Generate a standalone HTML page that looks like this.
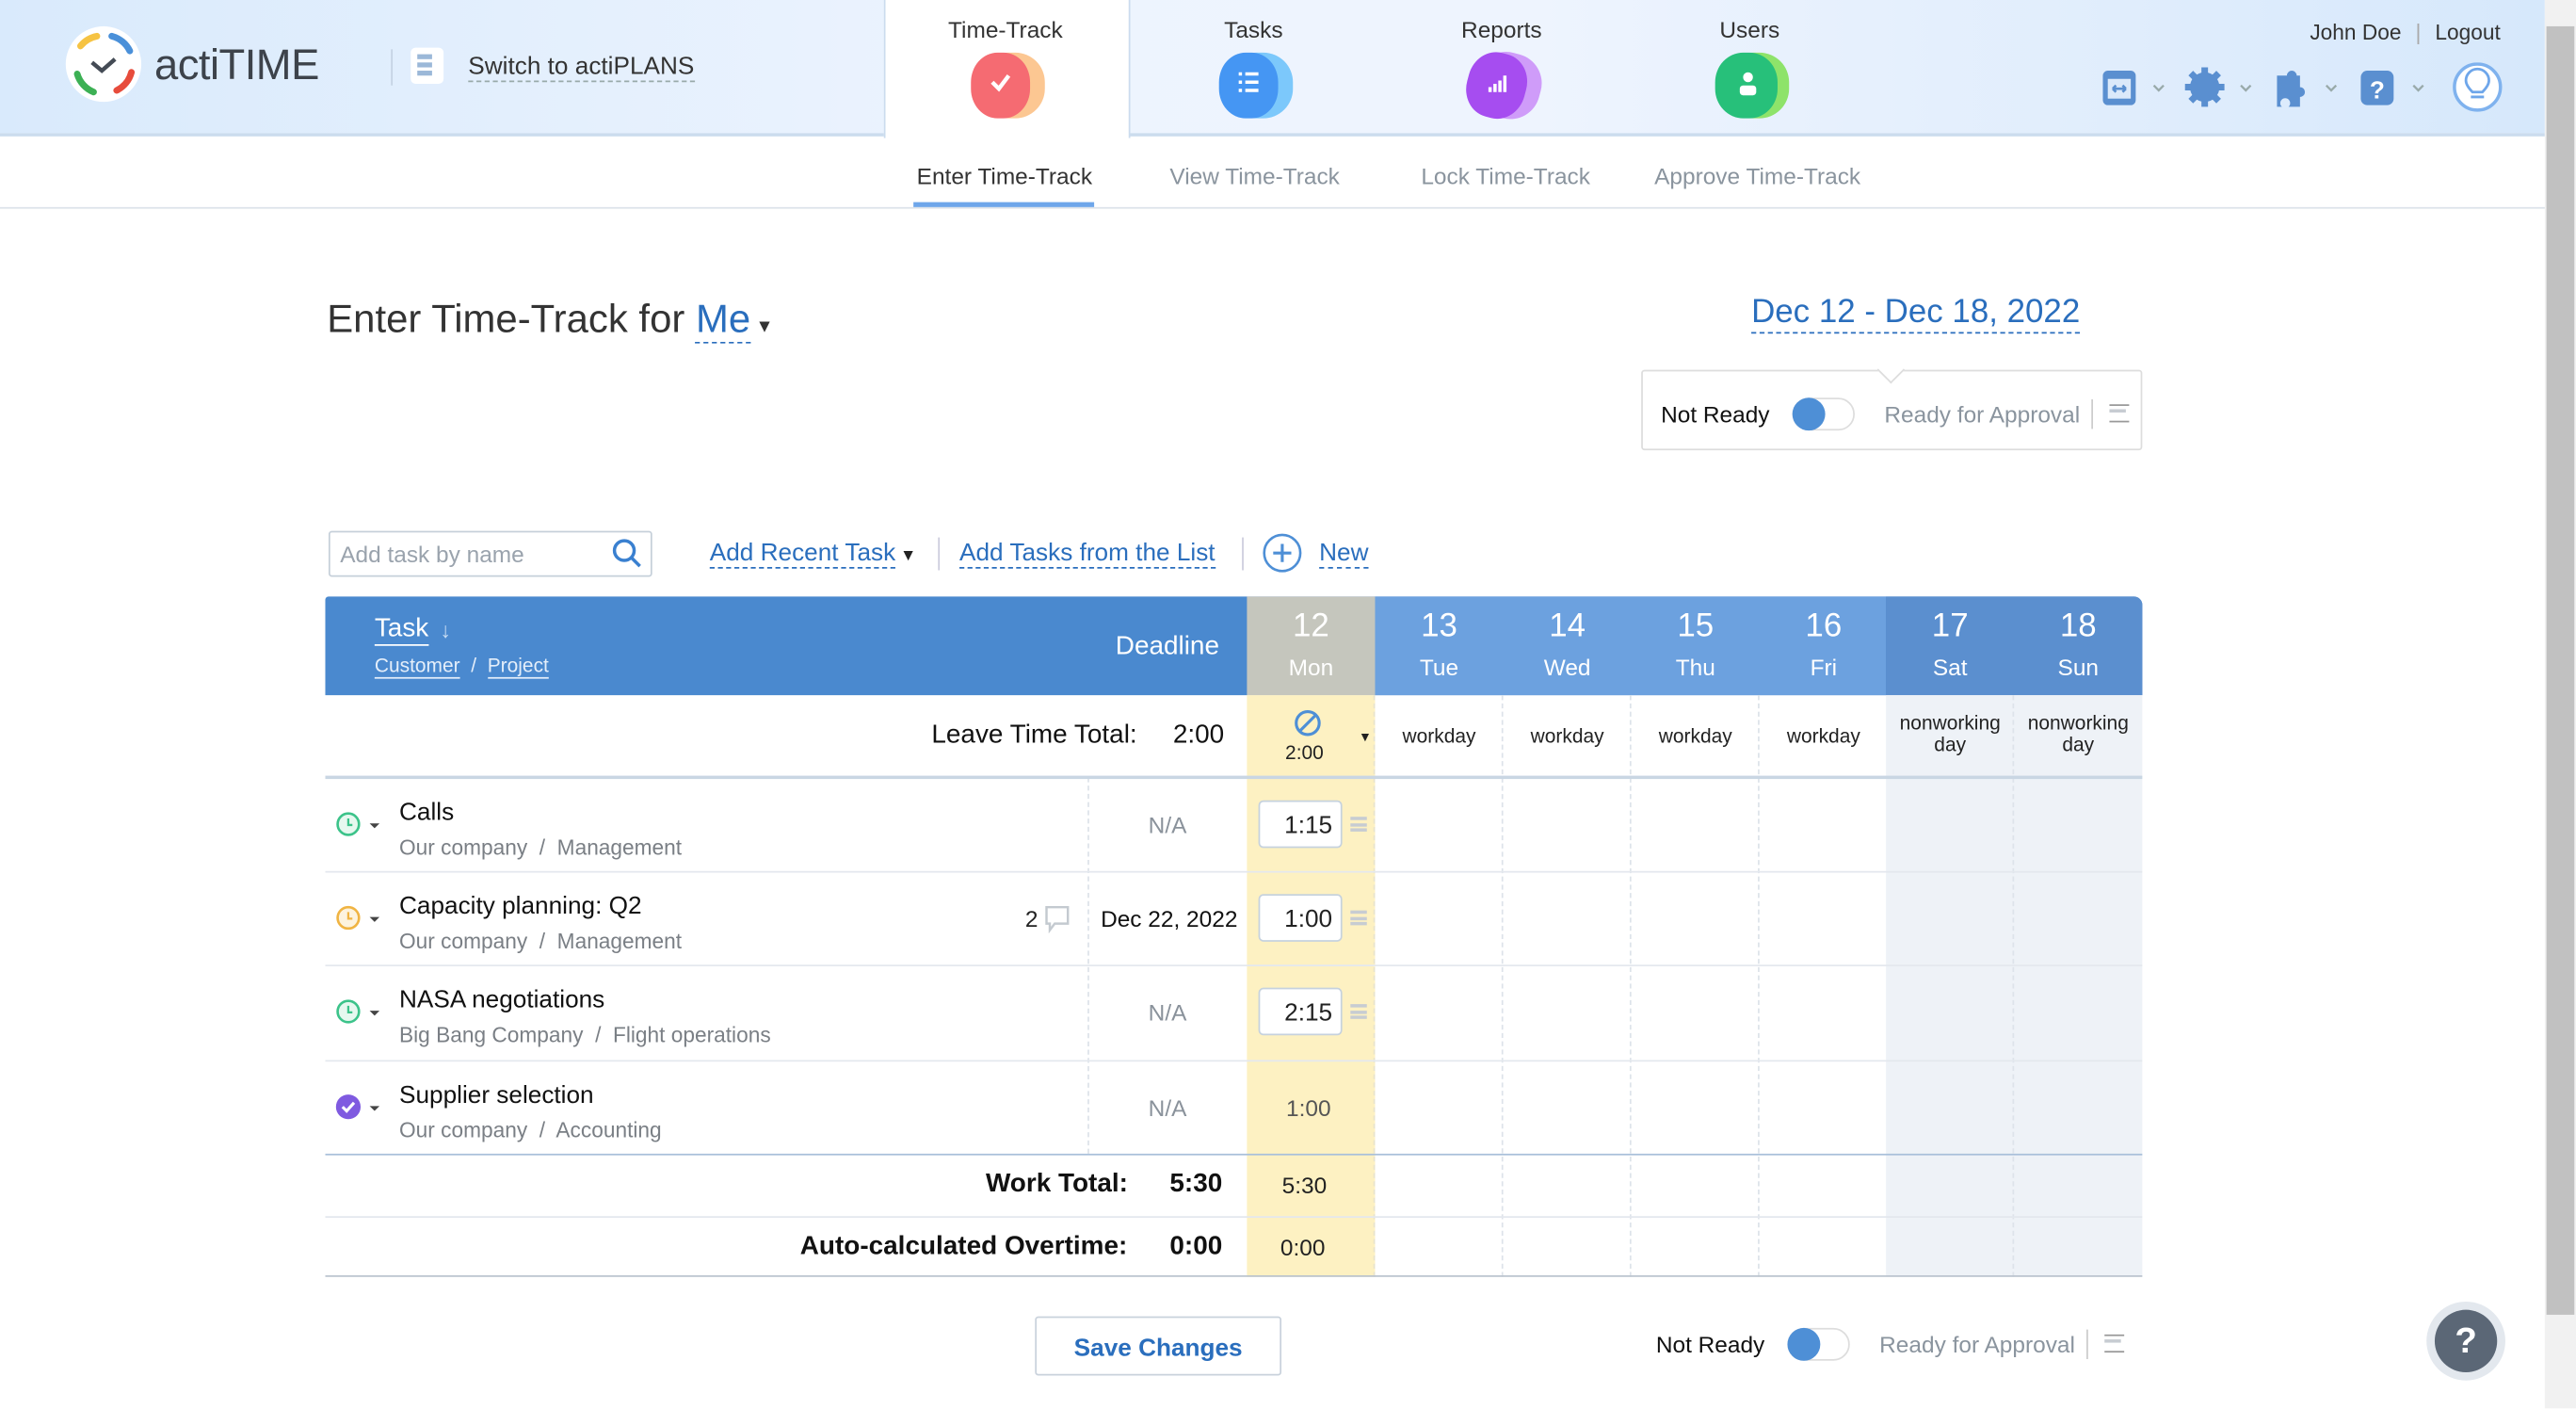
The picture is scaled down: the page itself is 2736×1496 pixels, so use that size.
<!DOCTYPE html>
<html><head><meta charset="utf-8"><style>
*{box-sizing:border-box;margin:0;padding:0}
html,body{width:2736px;height:1496px;overflow:hidden;background:#fff}
#w{position:absolute;left:0;top:0;width:1568px;height:857px;transform:scale(1.74490);transform-origin:0 0;font-family:"Liberation Sans",Arial,sans-serif;color:#222}
.a{position:absolute}
.hdr{left:0;top:0;width:1549px;height:83px;background:linear-gradient(90deg,#d9eafc 0%,#edf4fe 40%,#eef4fe 60%,#d6e8fb 100%);border-bottom:2px solid #cbdcee}
.tab{top:0;width:150px;text-align:center;font-size:14px;color:#333}
.tab .l{margin-top:10px}
.blob{position:absolute;left:55px;top:32px;width:40px;height:40px;border-radius:45%}
.sub{top:99px;font-size:14px;color:#8a949e}
.lnk{color:#2a6ebd;border-bottom:1px dashed #2a6ebd}
.th{color:#fff;text-align:center}
.cell{position:absolute;text-align:center;font-size:12px}
.inp{position:absolute;width:51px;height:29px;border:1px solid #c6d2de;border-radius:3px;background:#fff;text-align:right;padding:6px 5px 0 0;font-size:15px}
.tn{font-size:15px;color:#111}
.tp{font-size:13px;color:#7a7f85}
.lines{position:absolute;width:10px;height:9px;border-top:2px solid #c7ccd2;border-bottom:2px solid #c7ccd2}
.lines:after{content:"";position:absolute;left:0;top:1.5px;width:10px;height:2px;background:#c7ccd2}
</style></head><body><div id="w">
<div class="a hdr"></div>
<!-- logo -->
<svg class="a" style="left:39px;top:14px" width="50" height="50" viewBox="0 0 50 50">
<circle cx="24" cy="25" r="23" fill="#fff"/>
<path d="M10 14 A17 17 0 0 1 20 8" stroke="#f6c343" stroke-width="4" fill="none" stroke-linecap="round"/>
<path d="M29 8 A17 17 0 0 1 40 17" stroke="#4a90d9" stroke-width="4" fill="none" stroke-linecap="round"/>
<path d="M41 30 A17 17 0 0 1 32 41" stroke="#e74c3c" stroke-width="4" fill="none" stroke-linecap="round"/>
<path d="M18 42 A17 17 0 0 1 8 31" stroke="#3cb054" stroke-width="4" fill="none" stroke-linecap="round"/>
<path d="M17 24 L23 29 L31 22" stroke="#444b55" stroke-width="2.5" fill="none"/>
</svg>
<div class="a" style="left:94px;top:24px;font-size:26px;color:#3d434b;letter-spacing:-0.3px">actiTIME</div>
<div class="a" style="left:238px;top:30px;width:1px;height:22px;background:#c5d3e3"></div>
<div class="a" style="left:250px;top:29px;width:20px;height:22px;background:#fff;border-radius:3px"><div style="margin:4px 0 0 4px;width:9px;height:3px;background:#9bb8d8;box-shadow:0 5px 0 #9bb8d8,-0px 10px 0 -0px #9bb8d8"></div></div>
<div class="a" style="left:285px;top:32px;font-size:15px;color:#333;border-bottom:1px dashed #9aa">Switch to actiPLANS</div>
<!-- tabs -->
<div class="a" style="left:538px;top:0;width:150px;height:84px;background:#fff;border-left:1px solid #cbdcee;border-right:1px solid #cbdcee"></div>
<div class="a tab" style="left:537px"><div class="l">Time-Track</div>
<div class="blob" style="background:#fcc792;left:59px"></div><div class="blob" style="background:#f56b72;left:54px;width:36px"></div>
<svg class="a" style="left:64px;top:42px" width="16" height="16"><path d="M3 8 L7 12 L13 4" stroke="#fff" stroke-width="2.5" fill="none"/></svg></div>
<div class="a tab" style="left:688px"><div class="l">Tasks</div>
<div class="blob" style="background:#7cc8fb;left:59px"></div><div class="blob" style="background:#4596f3;left:54px;width:36px"></div>
<svg class="a" style="left:64px;top:42px" width="16" height="16"><path d="M2 3h2M2 8h2M2 13h2M6 3h8M6 8h8M6 13h8" stroke="#fff" stroke-width="2"/></svg></div>
<div class="a tab" style="left:839px"><div class="l">Reports</div>
<div class="blob" style="background:#cf9cf9;left:59px;transform:rotate(15deg)"></div><div class="blob" style="background:#a64df0;left:54px;width:36px;transform:rotate(15deg)"></div>
<svg class="a" style="left:65px;top:42px" width="16" height="16"><path d="M3 14v-3M6 14v-5M9 14v-7M12 14v-10" stroke="#fff" stroke-width="2"/></svg></div>
<div class="a tab" style="left:990px"><div class="l">Users</div>
<div class="blob" style="background:#8ee36a;left:59px"></div><div class="blob" style="background:#27c07a;left:54px;width:38px"></div>
<svg class="a" style="left:66px;top:42px" width="16" height="18"><circle cx="8" cy="5" r="3" fill="#fff"/><rect x="3" y="10" width="10" height="6" rx="2" fill="#fff"/></svg></div>
<!-- right header -->
<div class="a" style="left:1406px;top:12px;font-size:13px;color:#333">John Doe <span style="color:#aaa;margin:0 5px">|</span> Logout</div>
<svg class="a" style="left:1278px;top:38px" width="260" height="34">
<rect x="2" y="5" width="20" height="21" rx="3" fill="#5a8fd0"/><rect x="5" y="10" width="14" height="12" fill="#dbe9fa"/><path d="M8 16h8M8 16l2-2M8 16l2 2M16 16l-2-2M16 16l-2 2" stroke="#5a8fd0" stroke-width="1.5"/>
<path d="M33 14l3 3 3-3" stroke="#9aa" stroke-width="1.3" fill="none"/>
<circle cx="64" cy="15" r="9" fill="#5a8fd0"/><circle cx="64" cy="15" r="4" fill="#e3eefb"/><path d="M64 3v24M52 15h24M55.5 6.5l17 17M72.5 6.5l-17 17" stroke="#5a8fd0" stroke-width="4"/>
<path d="M86 14l3 3 3-3" stroke="#9aa" stroke-width="1.3" fill="none"/>
<path d="M108 8h6a3 3 0 1 1 6 0h2v7a3 3 0 1 1 0 6v6h-7a3 3 0 1 0 -4 0h-3z" fill="#5a8fd0"/>
<path d="M138 14l3 3 3-3" stroke="#9aa" stroke-width="1.3" fill="none"/>
<rect x="159" y="5" width="20" height="21" rx="4" fill="#5a8fd0"/><text x="169" y="22" font-size="15" font-weight="bold" fill="#fff" text-anchor="middle" font-family="Liberation Sans">?</text>
<path d="M191 14l3 3 3-3" stroke="#9aa" stroke-width="1.3" fill="none"/>
<circle cx="230" cy="15" r="14" fill="#fff" stroke="#7fb2ee" stroke-width="2"/><path d="M226 21h8M227 18c-3-3-4-5-4-7a7 7 0 0 1 14 0c0 2-1 4-4 7z" stroke="#6ea6ea" stroke-width="1.6" fill="none"/>
</svg>
<!-- scrollbar -->
<div class="a" style="left:1549px;top:0;width:19px;height:857px;background:#f1f1f1"></div>
<div class="a" style="left:1550px;top:16px;width:17px;height:784px;background:#c1c1c1"></div>
<!-- subtabs -->
<div class="a" style="left:0;top:126px;width:1549px;height:1px;background:#dde3ea"></div>
<div class="a sub" style="left:558px;color:#333">Enter Time-Track</div>
<div class="a" style="left:556px;top:123px;width:110px;height:3px;background:#6ea6ea"></div>
<div class="a sub" style="left:712px">View Time-Track</div>
<div class="a sub" style="left:865px">Lock Time-Track</div>
<div class="a sub" style="left:1007px">Approve Time-Track</div>
<!-- title -->
<div class="a" style="left:199px;top:181px;font-size:24px;color:#333">Enter Time-Track for <span class="lnk" style="font-size:24px">Me</span><span style="font-size:11px;color:#333"> ▼</span></div>
<div class="a lnk" style="left:1066px;top:179px;font-size:20px">Dec 12 - Dec 18, 2022</div>
<!-- status box -->
<div class="a" style="left:999px;top:225px;width:305px;height:49px;border:1px solid #ddd;border-radius:2px"></div>
<div class="a" style="left:1145px;top:219px;width:12px;height:12px;background:#fff;border-right:1px solid #ddd;border-bottom:1px solid #ddd;transform:rotate(45deg)"></div>
<div class="a" style="left:1011px;top:244px;font-size:14px;color:#111">Not Ready</div>
<div class="a" style="left:1091px;top:242px;width:38px;height:20px;border:1.5px solid #ddd;border-radius:10px"></div>
<div class="a" style="left:1091px;top:242px;width:20px;height:20px;border-radius:50%;background:#4e8fd6"></div>
<div class="a" style="left:1147px;top:244px;font-size:14px;color:#8a949e">Ready for Approval</div>
<div class="a" style="left:1273px;top:243px;width:1px;height:18px;background:#ccc"></div>
<div class="a lines" style="left:1284px;top:246px;width:12px;height:11px;border-width:1.5px;border-color:#999"></div>
<!-- toolbar -->
<div class="a" style="left:200px;top:323px;width:197px;height:28px;border:1px solid #c6d0da;border-radius:2px"></div>
<div class="a" style="left:207px;top:329px;font-size:14px;color:#9aa3ad">Add task by name</div>
<svg class="a" style="left:372px;top:327px" width="20" height="20"><circle cx="8" cy="8" r="6" stroke="#3a80d0" stroke-width="2" fill="none"/><path d="M12.5 12.5l5 5" stroke="#3a80d0" stroke-width="2"/></svg>
<div class="a" style="left:432px;top:328px;font-size:15px"><span class="lnk">Add Recent Task</span><span style="font-size:10px"> ▼</span></div>
<div class="a" style="left:571px;top:327px;width:1px;height:20px;background:#ccd"></div>
<div class="a lnk" style="left:584px;top:328px;font-size:15px">Add Tasks from the List</div>
<div class="a" style="left:756px;top:327px;width:1px;height:20px;background:#ccd"></div>
<svg class="a" style="left:768px;top:324px" width="25" height="25"><circle cx="12.5" cy="12.5" r="11" stroke="#4e8fd6" stroke-width="1.5" fill="none"/><path d="M12.5 7v11M7 12.5h11" stroke="#4e8fd6" stroke-width="1.8"/></svg>
<div class="a lnk" style="left:803px;top:328px;font-size:15px">New</div>
<!-- table header -->
<div class="a" style="left:198px;top:363px;width:1106px;height:60px;background:#4a89cf;border-radius:2px 5px 0 0"></div>
<div class="a" style="left:759px;top:363px;width:78px;height:60px;background:#c5c6bd"></div>
<div class="a" style="left:837px;top:363px;width:311px;height:60px;background:#6ca1df"></div>
<div class="a" style="left:1148px;top:363px;width:156px;height:60px;background:#5b8fcf;border-radius:0 5px 0 0"></div>
<div class="a" style="left:228px;top:374px;font-size:16px;color:#fff;border-bottom:1px solid #fff">Task</div>
<div class="a" style="left:268px;top:376px;font-size:13px;color:#c7dcf3">↓</div>
<div class="a" style="left:228px;top:398px;font-size:12px;color:#e4eefa"><span style="border-bottom:1px solid #e4eefa">Customer</span> &nbsp;/&nbsp; <span style="border-bottom:1px solid #e4eefa">Project</span></div>
<div class="a" style="left:679px;top:385px;font-size:16px;color:#fff">Deadline</div>
<!-- column backgrounds -->
<div class="a" style="left:759px;top:423px;width:78px;height:354px;background:#fdf1c2"></div>
<div class="a" style="left:1148px;top:423px;width:156px;height:354px;background:#eef2f7"></div>
<!-- dashed verticals -->
<div class="a" style="left:662px;top:473px;height:229px;border-left:1px dashed #dde3ea"></div>
<div class="a" style="left:914px;top:423px;height:354px;border-left:1px dashed #dde3ea"></div>
<div class="a" style="left:992px;top:423px;height:354px;border-left:1px dashed #dde3ea"></div>
<div class="a" style="left:1070px;top:423px;height:354px;border-left:1px dashed #dde3ea"></div>
<div class="a" style="left:1225px;top:423px;height:354px;border-left:1px dashed #dde3ea"></div>
<div class="a" style="left:836px;top:423px;height:354px;border-left:1px dashed #e8e3cc"></div>
<!-- day headers -->
<div id="days"></div>
<div class="a th" style="left:759px;top:370px;width:78px;font-size:20px">12</div><div class="a th" style="left:759px;top:398px;width:78px;font-size:14px">Mon</div>
<div class="a th" style="left:837px;top:370px;width:78px;font-size:20px">13</div><div class="a th" style="left:837px;top:398px;width:78px;font-size:14px">Tue</div>
<div class="a th" style="left:915px;top:370px;width:78px;font-size:20px">14</div><div class="a th" style="left:915px;top:398px;width:78px;font-size:14px">Wed</div>
<div class="a th" style="left:993px;top:370px;width:78px;font-size:20px">15</div><div class="a th" style="left:993px;top:398px;width:78px;font-size:14px">Thu</div>
<div class="a th" style="left:1071px;top:370px;width:78px;font-size:20px">16</div><div class="a th" style="left:1071px;top:398px;width:78px;font-size:14px">Fri</div>
<div class="a th" style="left:1148px;top:370px;width:78px;font-size:20px">17</div><div class="a th" style="left:1148px;top:398px;width:78px;font-size:14px">Sat</div>
<div class="a th" style="left:1226px;top:370px;width:78px;font-size:20px">18</div><div class="a th" style="left:1226px;top:398px;width:78px;font-size:14px">Sun</div>
<!-- leave row -->
<div class="a" style="left:567px;top:439px;font-size:16px;color:#111">Leave Time Total:</div>
<div class="a" style="left:714px;top:439px;font-size:16px;color:#111">2:00</div>
<svg class="a" style="left:787px;top:431px" width="18" height="18"><circle cx="9" cy="9" r="7" stroke="#4e8fd6" stroke-width="1.8" fill="none"/><path d="M4 14L14 4" stroke="#4e8fd6" stroke-width="1.8"/></svg>
<div class="cell" style="left:759px;top:451px;width:70px">2:00</div>
<div class="a" style="left:827px;top:444px;font-size:8px">▼</div>
<div class="cell" style="left:837px;top:441px;width:78px">workday</div>
<div class="cell" style="left:915px;top:441px;width:78px">workday</div>
<div class="cell" style="left:993px;top:441px;width:78px">workday</div>
<div class="cell" style="left:1071px;top:441px;width:78px">workday</div>
<div class="cell" style="left:1148px;top:434px;width:78px;line-height:13px">nonworking<br>day</div>
<div class="cell" style="left:1226px;top:434px;width:78px;line-height:13px">nonworking<br>day</div>
<div class="a" style="left:198px;top:472px;width:1106px;height:2px;background:#c9d6e3"></div>
<!-- rows -->
<div class="a" style="left:198px;top:530px;width:1106px;height:1px;background:#e4e8ee"></div>
<div class="a" style="left:198px;top:587px;width:1106px;height:1px;background:#e4e8ee"></div>
<div class="a" style="left:198px;top:645px;width:1106px;height:1px;background:#e4e8ee"></div>
<div class="a" style="left:198px;top:702px;width:1106px;height:1px;background:#a9c0da"></div>
<div class="a" style="left:198px;top:740px;width:1106px;height:1px;background:#e4e8ee"></div>
<div class="a" style="left:198px;top:776px;width:1106px;height:1px;background:#bcc5cf"></div>

<svg class="a" style="left:204px;top:493px" width="30" height="18"><circle cx="8" cy="8.5" r="6.5" stroke="#3cc38a" stroke-width="1.5" fill="#e6f8ef"/><path d="M8 5v4h2.5" stroke="#3cc38a" stroke-width="1.3" fill="none"/><path d="M21 8h6l-3 3z" fill="#444"/></svg>
<div class="a tn" style="left:243px;top:486px">Calls</div><div class="a tp" style="left:243px;top:508px">Our company &nbsp;/&nbsp; Management</div>
<div class="a tp" style="left:699px;top:494px;font-size:14px;color:#8a929b">N/A</div>
<div class="inp" style="left:766px;top:487px">1:15</div><div class="lines" style="left:822px;top:497px"></div>

<svg class="a" style="left:204px;top:550px" width="30" height="18"><circle cx="8" cy="8.5" r="6.5" stroke="#f0b443" stroke-width="1.5" fill="#fdf3de"/><path d="M8 5v4h2.5" stroke="#f0b443" stroke-width="1.3" fill="none"/><path d="M21 8h6l-3 3z" fill="#444"/></svg>
<div class="a tn" style="left:243px;top:543px">Capacity planning: Q2</div><div class="a tp" style="left:243px;top:565px">Our company &nbsp;/&nbsp; Management</div>
<div class="a" style="left:624px;top:551px;font-size:14px">2</div>
<svg class="a" style="left:635px;top:550px" width="18" height="18"><path d="M2 2h13v10h-8l-3 4v-4h-2z" stroke="#c4cad0" stroke-width="1.4" fill="#fff"/></svg>
<div class="a" style="left:670px;top:551px;font-size:14px;color:#111">Dec 22, 2022</div>
<div class="inp" style="left:766px;top:544px">1:00</div><div class="lines" style="left:822px;top:554px"></div>

<svg class="a" style="left:204px;top:607px" width="30" height="18"><circle cx="8" cy="8.5" r="6.5" stroke="#3cc38a" stroke-width="1.5" fill="#e6f8ef"/><path d="M8 5v4h2.5" stroke="#3cc38a" stroke-width="1.3" fill="none"/><path d="M21 8h6l-3 3z" fill="#444"/></svg>
<div class="a tn" style="left:243px;top:600px">NASA negotiations</div><div class="a tp" style="left:243px;top:622px">Big Bang Company &nbsp;/&nbsp; Flight operations</div>
<div class="a tp" style="left:699px;top:608px;font-size:14px;color:#8a929b">N/A</div>
<div class="inp" style="left:766px;top:601px">2:15</div><div class="lines" style="left:822px;top:611px"></div>

<svg class="a" style="left:204px;top:665px" width="30" height="18"><circle cx="8" cy="8.5" r="7.5" fill="#7f5ae0"/><path d="M4.5 8.5l2.5 2.5 4.5-5" stroke="#fff" stroke-width="1.8" fill="none"/><path d="M21 8h6l-3 3z" fill="#444"/></svg>
<div class="a tn" style="left:243px;top:658px">Supplier selection</div><div class="a tp" style="left:243px;top:680px">Our company &nbsp;/&nbsp; Accounting</div>
<div class="a tp" style="left:699px;top:666px;font-size:14px;color:#8a929b">N/A</div>
<div class="cell" style="left:759px;top:666px;width:75px;font-size:14px;color:#555">1:00</div>

<div class="a" style="left:600px;top:712px;font-size:16px;font-weight:bold;color:#111">Work Total:</div>
<div class="a" style="left:712px;top:712px;font-size:16px;font-weight:bold;color:#111">5:30</div>
<div class="cell" style="left:759px;top:713px;width:70px;font-size:14px">5:30</div>
<div class="a" style="left:487px;top:750px;font-size:16px;font-weight:bold;color:#111">Auto-calculated Overtime:</div>
<div class="a" style="left:712px;top:750px;font-size:16px;font-weight:bold;color:#111">0:00</div>
<div class="cell" style="left:759px;top:751px;width:68px;font-size:14px">0:00</div>
<!-- bottom -->
<div class="a" style="left:630px;top:801px;width:150px;height:36px;border:1px solid #c9d2dc;border-radius:2px;text-align:center;padding-top:10px;font-size:15px;font-weight:bold;color:#2a6ebd">Save Changes</div>
<div class="a" style="left:1008px;top:810px;font-size:14px;color:#111">Not Ready</div>
<div class="a" style="left:1088px;top:808px;width:38px;height:20px;border:1.5px solid #ddd;border-radius:10px"></div>
<div class="a" style="left:1088px;top:808px;width:20px;height:20px;border-radius:50%;background:#4e8fd6"></div>
<div class="a" style="left:1144px;top:810px;font-size:14px;color:#8a949e">Ready for Approval</div>
<div class="a" style="left:1270px;top:809px;width:1px;height:18px;background:#ccc"></div>
<div class="a lines" style="left:1281px;top:812px;width:12px;height:11px;border-width:1.5px;border-color:#999"></div>
<div class="a" style="left:1477px;top:792px;width:48px;height:48px;border-radius:50%;background:#e3e8ee"></div>
<div class="a" style="left:1482px;top:797px;width:38px;height:38px;border-radius:50%;background:#5b6776;color:#fff;text-align:center;font-size:22px;font-weight:bold;padding-top:6px">?</div>
</div></body></html>
